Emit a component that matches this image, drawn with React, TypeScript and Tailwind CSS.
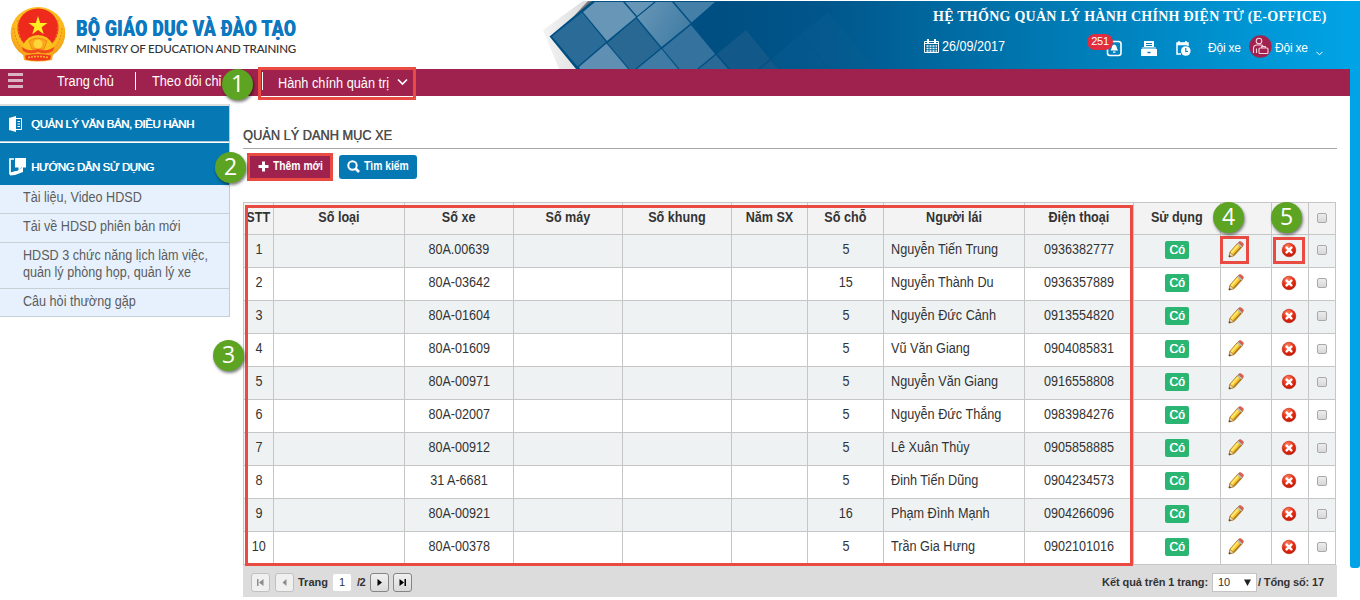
import React from "react";
import { clsx } from "clsx";

const cars = [
  ["80A.00639", "5", "Nguyễn Tiến Trung", "0936382777"],
  ["80A-03642", "15", "Nguyễn Thành Du", "0936357889"],
  ["80A-01604", "5", "Nguyễn Đức Cảnh", "0913554820"],
  ["80A-01609", "5", "Vũ Văn Giang", "0904085831"],
  ["80A-00971", "5", "Nguyễn Văn Giang", "0916558808"],
  ["80A-02007", "5", "Nguyễn Đức Thắng", "0983984276"],
  ["80A-00912", "5", "Lê Xuân Thủy", "0905858885"],
  ["31 A-6681", "5", "Đinh Tiến Dũng", "0904234573"],
  ["80A-00921", "16", "Phạm Đình Mạnh", "0904266096"],
  ["80A-00378", "5", "Trần Gia Hưng", "0902101016"],
];

const GRID =
  "grid grid-cols-[30px_131px_109px_109px_109px_76px_76px_141px_109px_87px_51px_37px_28px] border-b border-[#c6c6c6]";

function Cell({ children, className }: { children?: React.ReactNode; className?: string }) {
  return (
    <div
      className={clsx(
        "flex min-w-0 items-center border-l border-[#c6c6c6] whitespace-nowrap last:border-r",
        className,
      )}
    >
      {children}
    </div>
  );
}

function Mid({ children }: { children: React.ReactNode }) {
  return <span className="scale-x-90">{children}</span>;
}

function Checkbox() {
  return (
    <span className="h-[10px] w-[10px] rounded-[2px] border border-[#a9a9a9] bg-gradient-to-b from-[#ececec] to-[#d8d8d8]" />
  );
}

function Pencil() {
  return (
    <svg width="16" height="17" viewBox="0 0 16 17">
      <path d="M1 16 L2 11 L10 1.8 L14.4 5.6 L6.2 14.6 Z" fill="#f5c02c" stroke="#a8741a" strokeWidth=".8" />
      <path d="M3.4 11.8 L10.6 3.6" stroke="#ffe970" strokeWidth="2" />
      <path d="M5.8 13.9 L13.4 5.6" stroke="#a8741a" strokeWidth="1.2" />
      <path d="M1.8 11.6 L5.9 14.5 L1 16 Z" fill="#f2dcb4" stroke="#94600f" strokeWidth=".5" />
      <path d="M1 16 L1.4 13.9 L3.1 15.3 Z" fill="#333" />
      <path d="M9.2 3 L10.4 1.6 L14.6 5.2 L13.4 6.6 Z" fill="#c4c4bc" stroke="#888" strokeWidth=".4" />
      <path d="M10.4 1.6 Q11.4 0 13 .8 L15.2 2.4 Q16 3.6 14.6 5.2 Z" fill="#e0604a" stroke="#b85040" strokeWidth=".5" />
    </svg>
  );
}

function DeleteIcon() {
  return (
    <svg width="16" height="16" viewBox="0 0 16 16">
      <defs>
        <radialGradient id="del" cx=".4" cy=".25" r=".8">
          <stop offset="0" stopColor="#ff8466" />
          <stop offset=".5" stopColor="#ec2f14" />
          <stop offset="1" stopColor="#b81404" />
        </radialGradient>
      </defs>
      <circle cx="8" cy="8" r="6.8" fill="url(#del)" stroke="#c0200c" strokeWidth=".6" />
      <path d="M5.6 5.6 L10.4 10.4 M10.4 5.6 L5.6 10.4" stroke="#fff" strokeWidth="2.5" strokeLinecap="round" />
    </svg>
  );
}

function Emblem() {
  return (
    <svg width="56" height="56" viewBox="0 0 56 56">
      <defs>
        <radialGradient id="gold" cx=".5" cy=".4" r=".6">
          <stop offset="0" stopColor="#ffdf2e" />
          <stop offset=".75" stopColor="#fbb81c" />
          <stop offset="1" stopColor="#f0961a" />
        </radialGradient>
      </defs>
      <ellipse cx="28" cy="27" rx="27.3" ry="26" fill="url(#gold)" />
      <path d="M12 42 L44 42 L42 54 Q28 57 14 54 Z" fill="#f9a71b" />
      <ellipse cx="28" cy="22.5" rx="20.5" ry="20" fill="#ee2a1c" />
      <path d="M4 22 Q5 38 17 47 M8 14 Q7 34 20 45 M52 22 Q51 38 39 47 M48 14 Q49 34 36 45" stroke="#ef7c1a" strokeWidth="1" fill="none" strokeDasharray="2 1.5" />
      <path d="M28 10 L30.2 17 L37.5 17 L31.6 21.2 L33.8 28.2 L28 24 L22.2 28.2 L24.4 21.2 L18.5 17 L25.8 17 Z" fill="#ffee22" />
      <path d="M13 39 Q18 29 28 29 Q38 29 43 39 L40 46 L16 46 Z" fill="#fbc21e" />
      <path d="M19 35 Q28 29 37 35 L34 43 L22 43 Z" fill="#f9a71b" stroke="#f47c1a" strokeWidth=".8" />
      <circle cx="28" cy="38" r="4.5" fill="#ffd63a" />
      <path d="M12 41 Q18 46 28 43 Q38 46 44 41 L43 45 Q36 49 28 46 Q20 49 13 45 Z" fill="#ee4a1c" />
      <path d="M15 49.5 Q28 46.5 41 49.5 L40 53.5 Q28 56 16 53.5 Z" fill="#ee3a1c" />
      <path d="M18 51.5 Q28 49.5 38 51.5" stroke="#ffb52a" strokeWidth="1.6" strokeDasharray="2 1" fill="none" />
    </svg>
  );
}

function Banner() {
  return (
    <svg className="absolute top-0 left-[540px]" width="820" height="69" viewBox="540 0 820 69">
      <defs>
        <linearGradient id="sky" gradientUnits="userSpaceOnUse" x1="720" x2="1355" y1="0" y2="0">
          <stop offset="0" stopColor="#004f82" />
          <stop offset=".15" stopColor="#00558a" />
          <stop offset=".45" stopColor="#0073ab" />
          <stop offset="1" stopColor="#00a4e6" />
        </linearGradient>
        <linearGradient id="mid" gradientUnits="userSpaceOnUse" x1="630" x2="700" y1="10" y2="50">
          <stop offset="0" stopColor="#6a98b8" />
          <stop offset="1" stopColor="#35749e" />
        </linearGradient>
        <linearGradient id="paper" x1="0" x2="1" y1="0" y2="0">
          <stop offset="0" stopColor="#f4f4f4" />
          <stop offset="1" stopColor="#d8d8d8" />
        </linearGradient>
      </defs>
      <path d="M543 30 L583 1 L596 1 L570 30 L578 69 L559 69 Z" fill="url(#paper)" />
      <path d="M574 16 L588 1 L594 1 Z" fill="#777" />
      <path d="M549.5 36.5 L592 1 L1360 1 L1360 69 L576 69 Z" fill="url(#sky)" />
      <path d="M552 36.5 L582 12.5 L606 42 L577.5 66.5 Z" fill="#2b6b97" />
      <path d="M583 12 L595 2 L623 2 L636 17 L607 41 Z" fill="#6896b6" />
      <path d="M625 2 L654 2 L637 16 Z" fill="#6795b5" />
      <path d="M607.5 43 L636 18.5 L660.5 48 L635 69 L629.5 69 Z" fill="#296893" />
      <path d="M606.5 43.5 L579 67 L580 69 L628 69 Z" fill="#5f90b3" />
      <path d="M637 17.5 L656 2 L672 2 L690.5 23.5 L661.5 47 Z" fill="url(#mid)" />
      <path d="M674 2 L715 2 L691.5 22.5 Z" fill="#447fa7" />
      <path d="M662.5 48.5 L691 25 L715 54 L697 69 L679.5 69 Z" fill="#35739e" />
      <path d="M637 69 L661.5 49 L678 69 Z" fill="#3f7ba4" />
      <path d="M699 69 L716 55 L728 69 Z" fill="#2a6996" />
      <path d="M717 54 L746 30 L770 59 L758 69 L730 69 Z" fill="#125888" />
      <path d="M771 59 L828 12 L876 69 L780 69 Z" fill="#0b5e93" opacity=".35" />
      <path d="M760 69 L771 60 L779 69 Z" fill="#125888" />
      <path d="M802 36 L829 69" stroke="#00508a" strokeWidth="1" opacity=".4" />
    </svg>
  );
}

function Marker({ n, className }: { n: number; className: string }) {
  return (
    <div
      className={clsx(
        "absolute flex h-[31px] w-[31px] items-center justify-center rounded-full bg-[#5da423] pb-[3px] font-['Open_Sans',sans-serif] text-[23px] leading-none text-white shadow-[1px_2px_3px_rgba(0,0,0,0.5)]",
        className,
      )}
    >
      {n}
    </div>
  );
}

function PageButton({ d, disabled, className }: { d: string; disabled?: boolean; className?: string }) {
  return (
    <span
      className={clsx(
        "flex h-[19px] w-[19px] items-center justify-center rounded-[3px] border",
        disabled ? "border-[#c0c0c0] bg-[#f0f0f0] text-[#8c8c8c]" : "border-[#858585] bg-gradient-to-b from-[#f0f0f0] to-[#dadada] text-black",
        className,
      )}
    >
      <svg width="9" height="9" viewBox="0 0 9 9" fill="currentColor">
        <path d={d} />
      </svg>
    </span>
  );
}

export default function App() {
  return (
    <div className="relative flex h-[600px] w-[1360px] overflow-hidden bg-white font-['Liberation_Sans',Arial,sans-serif] text-[14px] text-[#333]">
      <Banner />
      <div className="relative flex w-[1350px] flex-col">
        <header className="flex h-[69px] justify-between">
          <div className="flex pt-[6px] pl-[10px]">
            <Emblem />
            <div className="ml-[10px] w-[240px] pt-[9px]">
              <div className="w-[277px] origin-left scale-x-[0.795] font-['Roboto',sans-serif] text-[22px] leading-[27px] font-black tracking-[0.46px] whitespace-nowrap text-[#0b78bf] [text-shadow:0.5px_0_0_#0b78bf]">
                BỘ GIÁO DỤC VÀ ĐÀO TẠO
              </div>
              <div className="origin-left scale-x-[0.962] font-['Lato',sans-serif] text-[12px] leading-[13px] font-medium tracking-[-0.2px] whitespace-nowrap text-[#333]">
                MINISTRY OF EDUCATION AND TRAINING
              </div>
            </div>
          </div>
          <div className="flex w-[430px] flex-col text-white">
            <h1 className="pt-[8px] pl-[13px] font-['Liberation_Serif',serif] text-[14px] leading-[17px] font-bold tracking-[0.26px] whitespace-nowrap">
              HỆ THỐNG QUẢN LÝ HÀNH CHÍNH ĐIỆN TỬ (E-OFFICE)
            </h1>
            <div className="flex h-[44px] items-center pt-[2px] pl-[4px] text-[12px]">
              <svg className="-mt-[4px]" width="15" height="15" viewBox="0 0 15 15" fill="none" stroke="#fff">
                <path d="M.5 2.5 H14.5 V13.5 H.5 Z M0 4.5 H15" />
                <path d="M4 0 V4 M11 0 V4" strokeWidth="2" />
                <path d="M2.5 7 H13 M2.5 9.5 H13 M2.5 12 H13" strokeDasharray="2 1" strokeWidth="1.5" />
              </svg>
              <span className="-mt-[4px] ml-[3px] w-[164px] origin-left scale-x-90 text-[14px]">26/09/2017</span>
              <svg width="17" height="17" viewBox="0 0 17 17" fill="none">
                <rect x="1.5" y="1.5" width="13.5" height="14" rx="2.5" stroke="#fff" strokeWidth="1.6" />
                <path d="M8.2 4.5 Q10.8 5 10.8 8 L12 10.5 H4.5 L5.7 8 Q5.7 5 8.2 4.5 Z M7 11.5 H9.5 V12.8 H7 Z" fill="#fff" />
              </svg>
              <svg className="ml-[18px]" width="16" height="15" viewBox="0 0 16 15">
                <path d="M3 0 H13 V6 H3 Z M0 8 H16 V15 H0 Z" fill="#fff" />
                <path d="M5 2.5 H11 M5 4.5 H11" stroke="#057db8" strokeWidth="1" />
                <path d="M6.5 11.5 H9.5" stroke="#057db8" strokeWidth="1.5" />
                <path d="M1 7 H15" stroke="#fff" strokeWidth="1" />
              </svg>
              <svg className="ml-[19px]" width="15" height="15" viewBox="0 0 15 15" fill="none" stroke="#fff">
                <path d="M5 13 H1 V2 H12 V5" strokeWidth="1.5" />
                <path d="M1 3 H12" strokeWidth="2.5" />
                <path d="M3 0 V3 M10 0 V3" strokeWidth="1.5" />
                <circle cx="9.8" cy="10" r="4.8" fill="#fff" stroke="none" />
                <path d="M9.8 7 V10.5 H12" stroke="#0489c8" strokeWidth="1.2" />
              </svg>
              <span className="ml-[17px] w-[42px] tracking-[-0.2px]">Đội xe</span>
              <svg className="-mt-[4px] -ml-[1px]" width="23" height="23" viewBox="0 0 23 23" fill="none" stroke="#f4d5df" strokeWidth="1.1">
                <circle cx="11.5" cy="11.5" r="11.2" fill="#a2224f" stroke="none" />
                <circle cx="10" cy="6" r="2.8" />
                <path d="M4.5 18 V13.5 Q4.5 10 8 10 H12 Q13.5 10 14 11 M7.5 13.5 V18" />
                <rect x="10" y="13" width="9" height="5.5" rx="1" />
                <path d="M12.7 13 V11.5 H16.3 V13" />
              </svg>
              <span className="ml-[3px] w-[40px] tracking-[-0.2px]">Đội xe</span>
              <svg className="mt-[10px] ml-[1px]" width="7" height="5" viewBox="0 0 7 5" fill="none" stroke="#fff">
                <path d="M.5 .8 L3.5 3.8 L6.5 .8" />
              </svg>
            </div>
          </div>
        </header>

        <nav className="flex h-[27px] bg-[#9e224d] text-white">
          <div className="flex w-[57px] flex-col gap-[3px] pt-[4px] pl-[8px]">
            <i className="h-[3px] w-[15px] bg-[#dcb3c2]" />
            <i className="h-[3px] w-[15px] bg-[#dcb3c2]" />
            <i className="h-[3px] w-[15px] bg-[#dcb3c2]" />
          </div>
          <span className="w-[78px] origin-left scale-x-[0.91] pt-[4px] leading-[16px] whitespace-nowrap">Trang chủ</span>
          <i className="mt-[3px] h-[18px] w-px bg-white" />
          <div className="w-[126px] pt-[4px] pl-[16px] leading-[16px] whitespace-nowrap">
            <span className="inline-block origin-left scale-x-[0.91]">Theo dõi chỉ</span>
          </div>
          <i className="mt-[3px] h-[18px] w-px bg-white" />
          <div className="w-[134px] pt-[6px] pl-[15px] leading-[16px] whitespace-nowrap">
            <span className="inline-block origin-left scale-x-[0.91]">Hành chính quản trị</span>
          </div>
          <svg className="mt-[9px]" width="11" height="8" viewBox="0 0 11 8" fill="none" stroke="#fff" strokeWidth="1.7">
            <path d="M1 1.5 L5.5 6 L10 1.5" />
          </svg>
        </nav>

        <div className="flex flex-1">
          <aside className="w-[243px] pt-[8px]">
            <div className="w-[230px] border-r border-[#c8ccd0]">
              <div className="flex h-[38px] items-center border-t-2 border-b border-t-[#dedede] border-b-[#b8c8d4] bg-[#0678b4] pl-[9px] text-white">
                <svg width="14" height="16" viewBox="0 0 14 16">
                  <path d="M0 2 L7 0 V16 L0 14 Z" fill="#fff" />
                  <path d="M7 2.5 H12.5 V13.5 H7 M8.5 5.5 H11 M8.5 8 H11 M8.5 10.5 H11" stroke="#fff" fill="none" />
                </svg>
                <span className="mt-[2px] ml-[8px] text-[11.5px] tracking-[-0.42px] whitespace-nowrap [text-shadow:0.4px_0_0_white]">
                  QUẢN LÝ VĂN BẢN, ĐIỀU HÀNH
                </span>
              </div>
              <div className="mt-px flex h-[42px] items-center bg-[#0678b4] pt-[5px] pl-[9px] text-white">
                <svg width="17" height="18" viewBox="0 0 17 18">
                  <path d="M5 1 H1 V15.5 L11 14" stroke="#fff" strokeWidth="1.7" fill="none" />
                  <path d="M6 0 H17 V9.5 H12.5 L9.5 12 V9.5 H6 Z M1 17.5 V15 L6 13 H8 L14 9 V14 L6 17 Z" fill="#fff" />
                </svg>
                <span className="mt-[2px] ml-[5px] text-[11.5px] tracking-[-0.45px] whitespace-nowrap [text-shadow:0.4px_0_0_white]">
                  HƯỚNG DẪN SỬ DỤNG
                </span>
              </div>
              <ul className="bg-[#e6f1fd] whitespace-nowrap text-[#5c5c5c]">
                <li className="h-[29px] border-b border-[#c8d0d6] pt-[4px] pl-[23px] leading-[17px]">
                  <span className="inline-block origin-left scale-x-90">Tài liệu, Video HDSD</span>
                </li>
                <li className="h-[29px] border-b border-[#c8d0d6] pt-[4px] pl-[23px] leading-[17px]">
                  <span className="inline-block origin-left scale-x-90">Tải về HDSD phiên bản mới</span>
                </li>
                <li className="h-[46px] border-b border-[#c8d0d6] pt-[4px] pl-[23px] leading-[17px]">
                  <span className="inline-block origin-left scale-x-90">
                    HDSD 3 chức năng lịch làm việc,
                    <br />
                    quản lý phòng họp, quản lý xe
                  </span>
                </li>
                <li className="h-[28px] border-b border-[#c8d0d6] pt-[4px] pl-[23px] leading-[17px]">
                  <span className="inline-block origin-left scale-x-90">Câu hỏi thường gặp</span>
                </li>
              </ul>
            </div>
          </aside>

          <main className="w-[1094px]">
            <h2 className="h-[53px] border-b border-[#a8a8a8] pt-[31px] leading-[16px] text-[#4c4c4c] [text-shadow:0.4px_0_0_#555]">
              <span className="inline-block origin-left scale-x-[0.912]">QUẢN LÝ DANH MỤC XE</span>
            </h2>
            <div className="flex h-[53px] items-start pt-[6px] pl-[6px] text-[12px] font-bold text-white">
              <button className="flex h-[24px] w-[82px] items-center rounded-[3px] bg-[#9e224d] pb-[2px] pl-[9px] whitespace-nowrap">
                <svg className="mr-[4px] shrink-0" width="11" height="11" viewBox="0 0 11 11">
                  <path d="M5.5 .5 V10.5 M.5 5.5 H10.5" stroke="#fff" strokeWidth="3" />
                </svg>
                <span className="origin-left scale-x-[0.86]">Thêm mới</span>
              </button>
              <button className="ml-[8px] flex h-[24px] w-[78px] items-center rounded-[3px] bg-[#0678b4] pb-[2px] pl-[8px] whitespace-nowrap">
                <svg className="mt-px mr-[4px] shrink-0" width="13" height="13" viewBox="0 0 13 13" fill="none" stroke="#fff">
                  <circle cx="5.5" cy="5.5" r="4.2" strokeWidth="2" />
                  <path d="M8.5 8.5 L12 12" strokeWidth="2.6" />
                </svg>
                <span className="origin-left scale-x-[0.86]">Tìm kiếm</span>
              </button>
            </div>

            <div className="w-[1093px]">
              <div className={clsx(GRID, "h-[33px] border-t bg-[#f3f3f3] font-bold")}>
                {["STT", "Số loại", "Số xe", "Số máy", "Số khung", "Năm SX", "Số chỗ", "Người lái", "Điện thoại", "Sử dụng"].map((h) => (
                  <Cell key={h} className="justify-center pb-[2px]">
                    <Mid>{h}</Mid>
                  </Cell>
                ))}
                <Cell />
                <Cell />
                <Cell className="justify-center pb-px">
                  <Checkbox />
                </Cell>
              </div>
              {cars.map(([plate, seats, driver, phone], i) => (
                <div key={plate} className={clsx(GRID, "h-[33px]", i % 2 === 0 ? "bg-[#eef2f3]" : "bg-white")}>
                  <Cell className="justify-center pb-[3px]">
                    <Mid>{i + 1}</Mid>
                  </Cell>
                  <Cell />
                  <Cell className="justify-center pb-[3px]">
                    <Mid>{plate}</Mid>
                  </Cell>
                  <Cell />
                  <Cell />
                  <Cell />
                  <Cell className="justify-center pb-[3px]">
                    <Mid>{seats}</Mid>
                  </Cell>
                  <Cell className="pb-[3px] pl-[7px]">
                    <span className="origin-left scale-x-[0.905]">{driver}</span>
                  </Cell>
                  <Cell className="justify-center pb-[3px]">
                    <Mid>{phone}</Mid>
                  </Cell>
                  <Cell className="justify-center pb-[2px]">
                    <span className="flex h-[18px] w-[24px] items-center justify-center rounded-[2px] bg-[#2bb573] text-[12px] text-white [text-shadow:0.4px_0_0_white]">
                      Có
                    </span>
                  </Cell>
                  <Cell className="pb-[3px] pl-[7px]">
                    <Pencil />
                  </Cell>
                  <Cell className="pb-[2px] pl-[9px]">
                    <DeleteIcon />
                  </Cell>
                  <Cell className="justify-center pb-[2px]">
                    <Checkbox />
                  </Cell>
                </div>
              ))}
            </div>

            <div className="flex h-[32px] w-[1094px] items-center bg-[#dcdcdc] pt-[3px] pl-[8px] text-[11px] font-bold">
              <PageButton disabled d="M1 1 H2.5 V8 H1 Z M7.5 1 V8 L3 4.5 Z" />
              <PageButton disabled className="ml-[5px]" d="M6.5 1 V8 L2.5 4.5 Z" />
              <span className="ml-[4px] w-[35px]">Trang</span>
              <span className="h-[17px] w-[18px] rounded-[2px] bg-white text-center leading-[17px] font-normal">1</span>
              <span className="ml-[6px] w-[13px] tracking-[-0.5px]">/2</span>
              <PageButton d="M2.5 1 V8 L7 4.5 Z" />
              <PageButton className="ml-[4px]" d="M6.5 1 H8 V8 H6.5 Z M1.5 1 V8 L6 4.5 Z" />
              <span className="mr-[4px] ml-auto tracking-[-0.08px] whitespace-nowrap">Kết quả trên 1 trang:</span>
              <span className="flex h-[19px] w-[45px] items-center justify-between border border-[#c4c4c4] bg-white pr-[5px] pl-[5px] font-normal">
                10
                <svg width="7" height="7" viewBox="0 0 7 7">
                  <path d="M0 .5 H7 L3.5 7 Z" fill="#222" />
                </svg>
              </span>
              <span className="w-[80px] pl-px tracking-[-0.14px] whitespace-nowrap">/ Tổng số: 17</span>
            </div>
          </main>
        </div>
      </div>
      <div className="relative mt-px h-[567px] w-[10px] rounded-[3px] bg-[#00a3e6]" />

      <span className="absolute top-[34px] left-[1087px] h-[16px] w-[26px] rounded-full bg-[#e02d3f] text-center text-[11px] leading-[15px] tracking-[-0.3px] text-white">
        251
      </span>
      <div className="absolute top-[67px] left-[258px] h-[33px] w-[158px] border-3 border-[#e94b43]" />
      <div className="absolute top-[153px] left-[247px] h-[28px] w-[86px] border-3 border-[#e94b43]" />
      <div className="absolute top-[205px] left-[245px] h-[361px] w-[888px] border-3 border-[#e94b43]" />
      <div className="absolute top-[236px] left-[1220px] h-[28px] w-[29px] border-3 border-[#e94b43]" />
      <div className="absolute top-[237px] left-[1273px] h-[27px] w-[32px] border-3 border-[#e94b43]" />
      <Marker n={1} className="top-[69px] left-[222px]" />
      <Marker n={2} className="top-[152px] left-[215px]" />
      <Marker n={3} className="top-[340px] left-[213px]" />
      <Marker n={4} className="top-[202px] left-[1213px]" />
      <Marker n={5} className="top-[202px] left-[1271px]" />
    </div>
  );
}
